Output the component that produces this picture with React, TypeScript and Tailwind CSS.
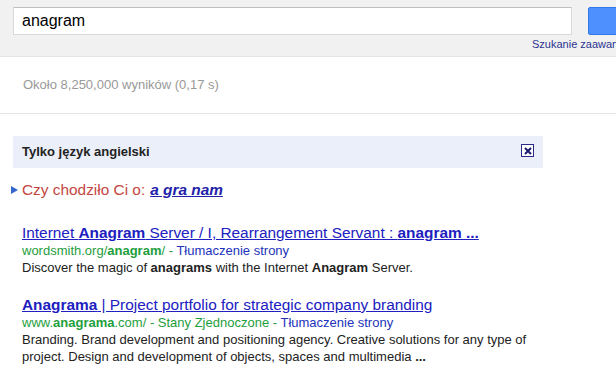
export default function App() {
  return (
    <div className="w-[616px] h-[385px] overflow-hidden bg-white font-['Liberation_Sans',Arial,sans-serif]">
      {/* Header */}
      <div className="h-[57px] bg-[#f1f1f1] border-b border-[#e5e5e5] flex overflow-hidden">
        <div className="w-[572px] shrink-0 pl-[13px] pt-[7px] flex flex-col">
          <div className="w-[559px] h-[28px] bg-white border border-[#d9d9d9] border-t-[#c0c0c0] flex items-center pl-[8px] text-[16px] text-black">
            anagram
          </div>
          <div className="mt-[2px] ml-[519px] w-[84px] overflow-hidden text-[11px] text-[#2a3490] leading-[14px] whitespace-nowrap">
            Szukanie zaawan
          </div>
        </div>
        <div className="ml-[16px] mt-[7px] w-[60px] h-[28px] rounded-[2px] bg-[#4d90fe] border border-[#3079ed] shrink-0" />
      </div>

      {/* Stats */}
      <div className="h-[57px] border-b border-[#e5e5e5] flex items-center pl-[23px] text-[13px] text-[#999]">
        Około 8,250,000 wyników (0,17 s)
      </div>

      <div className="pt-[22px] pl-[13px]">
        {/* Language notice */}
        <div className="w-[530px] h-[32px] bg-[#ebeff9] flex items-center justify-between pl-[9px] pr-[9px]">
          <span className="text-[13px] font-bold text-[#222]">Tylko język angielski</span>
          <span className="-mt-[3px] w-[13px] h-[13px] border border-[#2a2a8a] bg-white flex items-center justify-center">
            <svg width="8" height="8" viewBox="0 0 8 8">
              <path d="M1 1 L7 7 M7 1 L1 7" stroke="#1a1a6e" strokeWidth="2" />
            </svg>
          </span>
        </div>

        {/* Did you mean */}
        <div className="mt-[12px] flex items-center text-[15.4px] leading-[20px]">
          <svg width="9" height="8" viewBox="0 0 9 8" className="-ml-[3px] mr-[3px]">
            <path d="M1 0 L8 4 L1 8 Z" fill="#3366cc" />
          </svg>
          <span className="text-[#c4473f]">Czy chodziło Ci o:</span>
          <a className="ml-[5px] text-[#2222aa] font-bold italic underline">a gra nam</a>
        </div>

        {/* Result 1 */}
        <div className="mt-[23px] pl-[9px]">
          <a className="block text-[15.4px] leading-[19px] text-[#2020c0] underline">
            Internet <b>Anagram</b> Server / I, Rearrangement Servant : <b>anagram ...</b>
          </a>
          <div className="text-[13px] leading-[17px] text-[#1e9e3c]">
            wordsmith.org/<b>anagram</b>/ - <span className="text-[#2233bb]">Tłumaczenie strony</span>
          </div>
          <div className="text-[13px] leading-[17px] text-[#222]">
            Discover the magic of <b>anagrams</b> with the Internet <b>Anagram</b> Server.
          </div>
        </div>

        {/* Result 2 */}
        <div className="mt-[19px] pl-[9px]">
          <a className="block text-[15.4px] leading-[19px] text-[#2020c0] underline">
            <b>Anagrama</b> | Project portfolio for strategic company branding
          </a>
          <div className="text-[13px] leading-[17px] text-[#1e9e3c]">
            www.<b>anagrama</b>.com/ - Stany Zjednoczone - <span className="text-[#2233bb]">Tłumaczenie strony</span>
          </div>
          <div className="w-[520px] text-[13px] leading-[17px] text-[#222]">
            Branding. Brand development and positioning agency. Creative solutions for any type of project. Design and development of objects, spaces and multimedia <b>...</b>
          </div>
        </div>
      </div>
    </div>
  );
}
